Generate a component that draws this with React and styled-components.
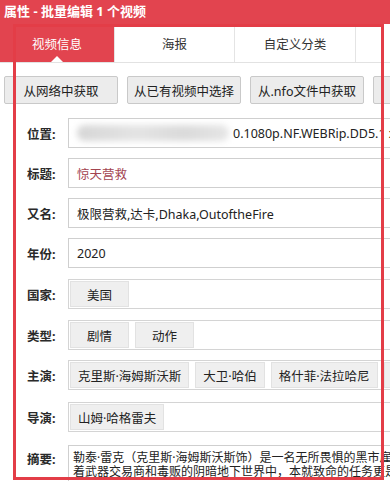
import React from 'react'
import styled, { createGlobalStyle } from 'styled-components'

const GlobalStyle = createGlobalStyle`
  html, body {
    margin: 0;
    padding: 0;
    background: #ffffff;
  }
  body {
    font-family: "Noto Sans", "Noto Sans CJK SC", sans-serif;
    color: #222;
  }
`

const RED = '#e2444f'

const Window = styled.div`
  position: relative;
  width: 390px;
  height: 481px;
  overflow: hidden;
  display: flex;
  flex-direction: column;
  background: #fff;
`
const TitleBar = styled.div`
  height: 24px;
  flex: 0 0 24px;
  background: ${RED};
  color: #fff;
  font-weight: bold;
  font-size: 13px;
  line-height: 23px;
  padding-left: 4px;
  white-space: nowrap;
`
const TabBar = styled.div`
  display: flex;
  height: 38px;
  flex: 0 0 38px;
  border-bottom: 1px solid #e2e2e2;
  background: #fff;
`
const Tab = styled.div`
  position: relative;
  flex: 0 0 ${p => p.$w}px;
  display: flex;
  align-items: center;
  justify-content: center;
  font-size: 12.5px;
  color: ${p => (p.$active ? '#fff' : '#333')};
  background: ${p => (p.$active ? RED : '#fff')};
  border-right: 1px solid #e4e4e4;
  box-sizing: border-box;
  &::after {
    content: '';
    display: ${p => (p.$active ? 'block' : 'none')};
    position: absolute;
    bottom: 0;
    left: 50%;
    margin-left: -6px;
    border-left: 6px solid transparent;
    border-right: 6px solid transparent;
    border-bottom: 6px solid #fff;
  }
`
const Content = styled.div`
  padding: 13px 0 0 4px;
  display: flex;
  flex-direction: column;
`
const ButtonRow = styled.div`
  display: flex;
  gap: 9px;
  white-space: nowrap;
`
const ActionButton = styled.div`
  flex: 0 0 114px;
  height: 28px;
  box-sizing: border-box;
  border: 1px solid #c9c9c9;
  border-radius: 2px;
  background: #ececec;
  font-size: 12.5px;
  display: flex;
  align-items: center;
  justify-content: center;
  color: #222;
`
const Form = styled.div`
  margin-top: 14px;
  display: flex;
  flex-direction: column;
  gap: 10px;
`
const Row = styled.div`
  display: flex;
  align-items: ${p => (p.$top ? 'flex-start' : 'center')};
  margin-top: ${p => p.$mt || 0}px;
`
const Label = styled.div`
  flex: 0 0 41px;
  padding-left: 23px;
  font-size: 12.5px;
  font-weight: bold;
  color: #2a2a2a;
  padding-top: ${p => (p.$top ? 4 : 0)}px;
`
const Field = styled.div`
  flex: 0 0 340px;
  height: 30px;
  box-sizing: border-box;
  border: 1px solid #cfcfcf;
  padding-left: 8px;
  display: flex;
  align-items: center;
  font-size: 12.5px;
  color: ${p => p.$color || '#222'};
  white-space: nowrap;
  overflow: hidden;
`
const Blur = styled.span`
  flex: 0 0 152px;
  height: 16px;
  margin-right: 4px;
  border-radius: 8px;
  background: linear-gradient(90deg, #d6d6d6, #e4e4e4 40%, #dadada 70%, #e6e6e6);
  filter: blur(3px);
`
const TagBox = styled.div`
  flex: 0 0 340px;
  height: 30px;
  box-sizing: border-box;
  border: 1px solid #d4d4d4;
  padding: 1px 0 1px 1px;
  display: flex;
  gap: 6px;
  overflow: hidden;
`
const Tag = styled.div`
  flex: 0 0 auto;
  min-width: 59px;
  box-sizing: border-box;
  padding: 0 7px;
  background: #efefef;
  border: 1px solid #e2e2e2;
  font-size: 12.5px;
  display: flex;
  align-items: center;
  justify-content: center;
  white-space: nowrap;
  color: #222;
`
const Summary = styled.div`
  flex: 0 0 340px;
  height: 60px;
  box-sizing: border-box;
  border: 1px solid #cfcfcf;
  padding: 5px 0 0 4px;
  font-size: 12px;
  line-height: 14px;
  color: #222;
  white-space: nowrap;
  overflow: hidden;
`
const Annotation = styled.div`
  position: absolute;
  left: 13px;
  top: 24px;
  width: 371px;
  height: 456px;
  box-sizing: border-box;
  border: 3px solid #e33d47;
  pointer-events: none;
`

const tabs = [
  { label: '视频信息', w: 115, active: true },
  { label: '海报', w: 120 },
  { label: '自定义分类', w: 121 },
  { label: '', w: 60 },
]

const buttons = ['从网络中获取', '从已有视频中选择', '从.nfo文件中获取', '']

const App = () => {
  return (
    <Window>
      <GlobalStyle />
      <TitleBar>属性 - 批量编辑 1 个视频</TitleBar>
      <TabBar>
        {tabs.map((t, i) => (
          <Tab key={i} $w={t.w} $active={t.active}>{t.label}</Tab>
        ))}
      </TabBar>
      <Content>
        <ButtonRow>
          {buttons.map((b, i) => (
            <ActionButton key={i}>{b}</ActionButton>
          ))}
        </ButtonRow>
        <Form>
          <Row>
            <Label>位置:</Label>
            <Field><Blur />0.1080p.NF.WEBRip.DD5.1 x264</Field>
          </Row>
          <Row>
            <Label>标题:</Label>
            <Field $color="#a3434f">惊天营救</Field>
          </Row>
          <Row>
            <Label>又名:</Label>
            <Field>极限营救,达卡,Dhaka,OutoftheFire</Field>
          </Row>
          <Row>
            <Label>年份:</Label>
            <Field>2020</Field>
          </Row>
          <Row $mt={1}>
            <Label>国家:</Label>
            <TagBox><Tag>美国</Tag></TagBox>
          </Row>
          <Row $mt={1}>
            <Label>类型:</Label>
            <TagBox><Tag>剧情</Tag><Tag>动作</Tag></TagBox>
          </Row>
          <Row>
            <Label>主演:</Label>
            <TagBox>
              <Tag>克里斯·海姆斯沃斯</Tag>
              <Tag>大卫·哈伯</Tag>
              <Tag>格什菲·法拉哈尼</Tag>
              <Tag>德里克·卢克</Tag>
            </TagBox>
          </Row>
          <Row $mt={2}>
            <Label>导演:</Label>
            <TagBox><Tag>山姆·哈格雷夫</Tag></TagBox>
          </Row>
          <Row $top $mt={3}>
            <Label $top>摘要:</Label>
            <Summary>
              勒泰·雷克（克里斯·海姆斯沃斯饰）是一名无所畏惧的黑市雇佣兵<br />
              着武器交易商和毒贩的阴暗地下世界中，本就致命的任务更是
            </Summary>
          </Row>
        </Form>
      </Content>
      <Annotation />
    </Window>
  )
}

export default App
